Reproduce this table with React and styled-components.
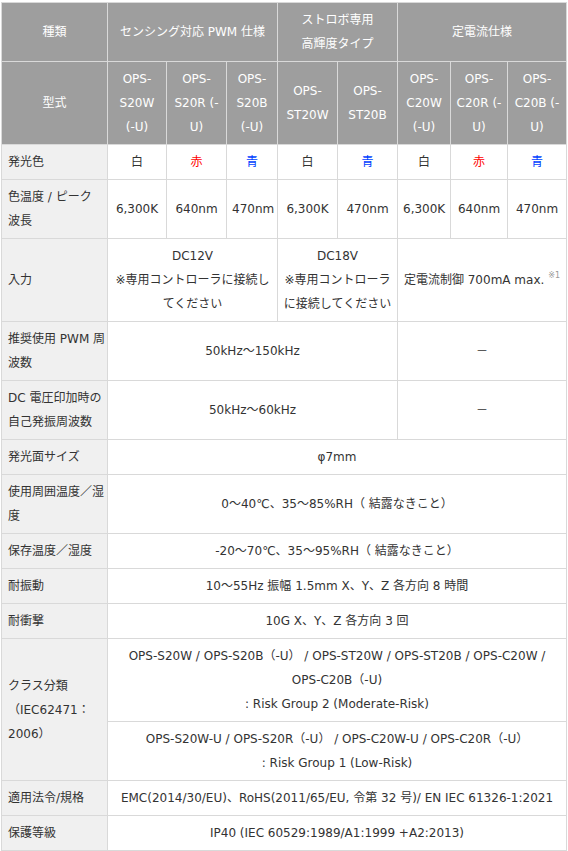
import React from 'react';
import styled, { createGlobalStyle } from 'styled-components';

/* ===== COLORS ===== */
const TEXT = '#333333';
const HEAD_BG = '#9e9e9e';
const LABEL_BG = '#f0f0f0';
const LINE = '#d9d9d9';
const RED = '#ff0000';
const BLUE = '#0041ff';

const GlobalStyle = createGlobalStyle`
  html, body {
    margin: 0;
    padding: 0;
    background: #ffffff;
  }
  body {
    font-family: "DejaVu Sans", "Noto Sans CJK JP", sans-serif;
    font-size: 12px;
    color: ${TEXT};
  }
`;

/* ===== TABLE ===== */

const Wrap = styled.div`
  padding: 2px 0 0 1px;
`;

const Table = styled.table`
  width: 566px;
  table-layout: fixed;
  border-collapse: collapse;
  line-height: 24px;
`;

const Th = styled.th`
  background: ${HEAD_BG};
  color: #ffffff;
  font-weight: normal;
  text-align: center;
  vertical-align: middle;
  padding: 5px 5px;
  border: 1px solid ${LINE};
  white-space: nowrap;
`;

const Label = styled.th`
  background: ${LABEL_BG};
  font-weight: normal;
  text-align: left;
  vertical-align: middle;
  padding: 5px 6px;
  border: 1px solid ${LINE};
  white-space: nowrap;
`;

const Td = styled.td`
  text-align: center;
  vertical-align: middle;
  padding: 5px 5px;
  border: 1px solid ${LINE};
  white-space: nowrap;
  color: ${(p) => p.$color || TEXT};
`;

const Note = styled.sup`
  font-size: 8px;
  color: #999999;
  vertical-align: top;
  line-height: 16px;
  margin-left: 4px;
`;

const widths = [106, 59, 60, 51, 60, 60, 53, 57, 59];

const models = [
  ['OPS-', 'S20W', '(-U)'],
  ['OPS-', 'S20R (-', 'U)'],
  ['OPS-', 'S20B', '(-U)'],
  ['OPS-', 'ST20W'],
  ['OPS-', 'ST20B'],
  ['OPS-', 'C20W', '(-U)'],
  ['OPS-', 'C20R (-', 'U)'],
  ['OPS-', 'C20B (-', 'U)'],
];

const colors = [
  ['白', TEXT],
  ['赤', RED],
  ['青', BLUE],
  ['白', TEXT],
  ['青', BLUE],
  ['白', TEXT],
  ['赤', RED],
  ['青', BLUE],
];

const temps = ['6,300K', '640nm', '470nm', '6,300K', '470nm', '6,300K', '640nm', '470nm'];

const Lines = ({ lines }) =>
  lines.map((l, i) => (
    <React.Fragment key={i}>
      {i > 0 && <br />}
      {l}
    </React.Fragment>
  ));

const App = () => {
  return (
    <>
      <GlobalStyle />
      <Wrap>
        <Table>
          <colgroup>
            {widths.map((w, i) => (
              <col key={i} style={{ width: w }} />
            ))}
          </colgroup>
          <tbody>
            <tr>
              <Th>種類</Th>
              <Th colSpan={3}>センシング対応 PWM 仕様</Th>
              <Th colSpan={2}>
                <Lines lines={['ストロボ専用', '高輝度タイプ']} />
              </Th>
              <Th colSpan={3}>定電流仕様</Th>
            </tr>
            <tr>
              <Th>型式</Th>
              {models.map((m, i) => (
                <Th key={i}>
                  <Lines lines={m} />
                </Th>
              ))}
            </tr>
            <tr>
              <Label>発光色</Label>
              {colors.map(([c, col], i) => (
                <Td key={i} $color={col}>
                  {c}
                </Td>
              ))}
            </tr>
            <tr>
              <Label>
                <Lines lines={['色温度 / ピーク', '波長']} />
              </Label>
              {temps.map((t, i) => (
                <Td key={i}>{t}</Td>
              ))}
            </tr>
            <tr>
              <Label>入力</Label>
              <Td colSpan={3}>
                <Lines lines={['DC12V', '※専用コントローラに接続し', 'てください']} />
              </Td>
              <Td colSpan={2}>
                <Lines lines={['DC18V', '※専用コントローラ', 'に接続してください']} />
              </Td>
              <Td colSpan={3}>
                定電流制御 700mA max.<Note>※1</Note>
              </Td>
            </tr>
            <tr>
              <Label>
                <Lines lines={['推奨使用 PWM 周', '波数']} />
              </Label>
              <Td colSpan={5}>50kHz～150kHz</Td>
              <Td colSpan={3}>－</Td>
            </tr>
            <tr>
              <Label>
                <Lines lines={['DC 電圧印加時の', '自己発振周波数']} />
              </Label>
              <Td colSpan={5}>50kHz～60kHz</Td>
              <Td colSpan={3}>－</Td>
            </tr>
            <tr>
              <Label>発光面サイズ</Label>
              <Td colSpan={8}>φ7mm</Td>
            </tr>
            <tr>
              <Label>
                <Lines lines={['使用周囲温度／湿', '度']} />
              </Label>
              <Td colSpan={8}>0～40℃、35～85%RH（ 結露なきこと）</Td>
            </tr>
            <tr>
              <Label>保存温度／湿度</Label>
              <Td colSpan={8}>-20～70℃、35～95%RH（ 結露なきこと）</Td>
            </tr>
            <tr>
              <Label>耐振動</Label>
              <Td colSpan={8}>10～55Hz 振幅 1.5mm X、Y、Z 各方向 8 時間</Td>
            </tr>
            <tr>
              <Label>耐衝撃</Label>
              <Td colSpan={8}>10G X、Y、Z 各方向 3 回</Td>
            </tr>
            <tr>
              <Label rowSpan={2}>
                <Lines lines={['クラス分類', '（IEC62471：', '2006）']} />
              </Label>
              <Td colSpan={8}>
                <Lines
                  lines={[
                    'OPS-S20W / OPS-S20B（-U） / OPS-ST20W / OPS-ST20B / OPS-C20W /',
                    'OPS-C20B（-U)',
                    ': Risk Group 2 (Moderate-Risk)',
                  ]}
                />
              </Td>
            </tr>
            <tr>
              <Td colSpan={8}>
                <Lines
                  lines={[
                    'OPS-S20W-U / OPS-S20R（-U） / OPS-C20W-U / OPS-C20R（-U）',
                    ': Risk Group 1 (Low-Risk)',
                  ]}
                />
              </Td>
            </tr>
            <tr>
              <Label>適用法令/規格</Label>
              <Td colSpan={8}>EMC(2014/30/EU)、RoHS(2011/65/EU, 令第 32 号)/ EN IEC 61326-1:2021</Td>
            </tr>
            <tr>
              <Label>保護等級</Label>
              <Td colSpan={8}>IP40 (IEC 60529:1989/A1:1999 +A2:2013)</Td>
            </tr>
          </tbody>
        </Table>
      </Wrap>
    </>
  );
};

export default App;
